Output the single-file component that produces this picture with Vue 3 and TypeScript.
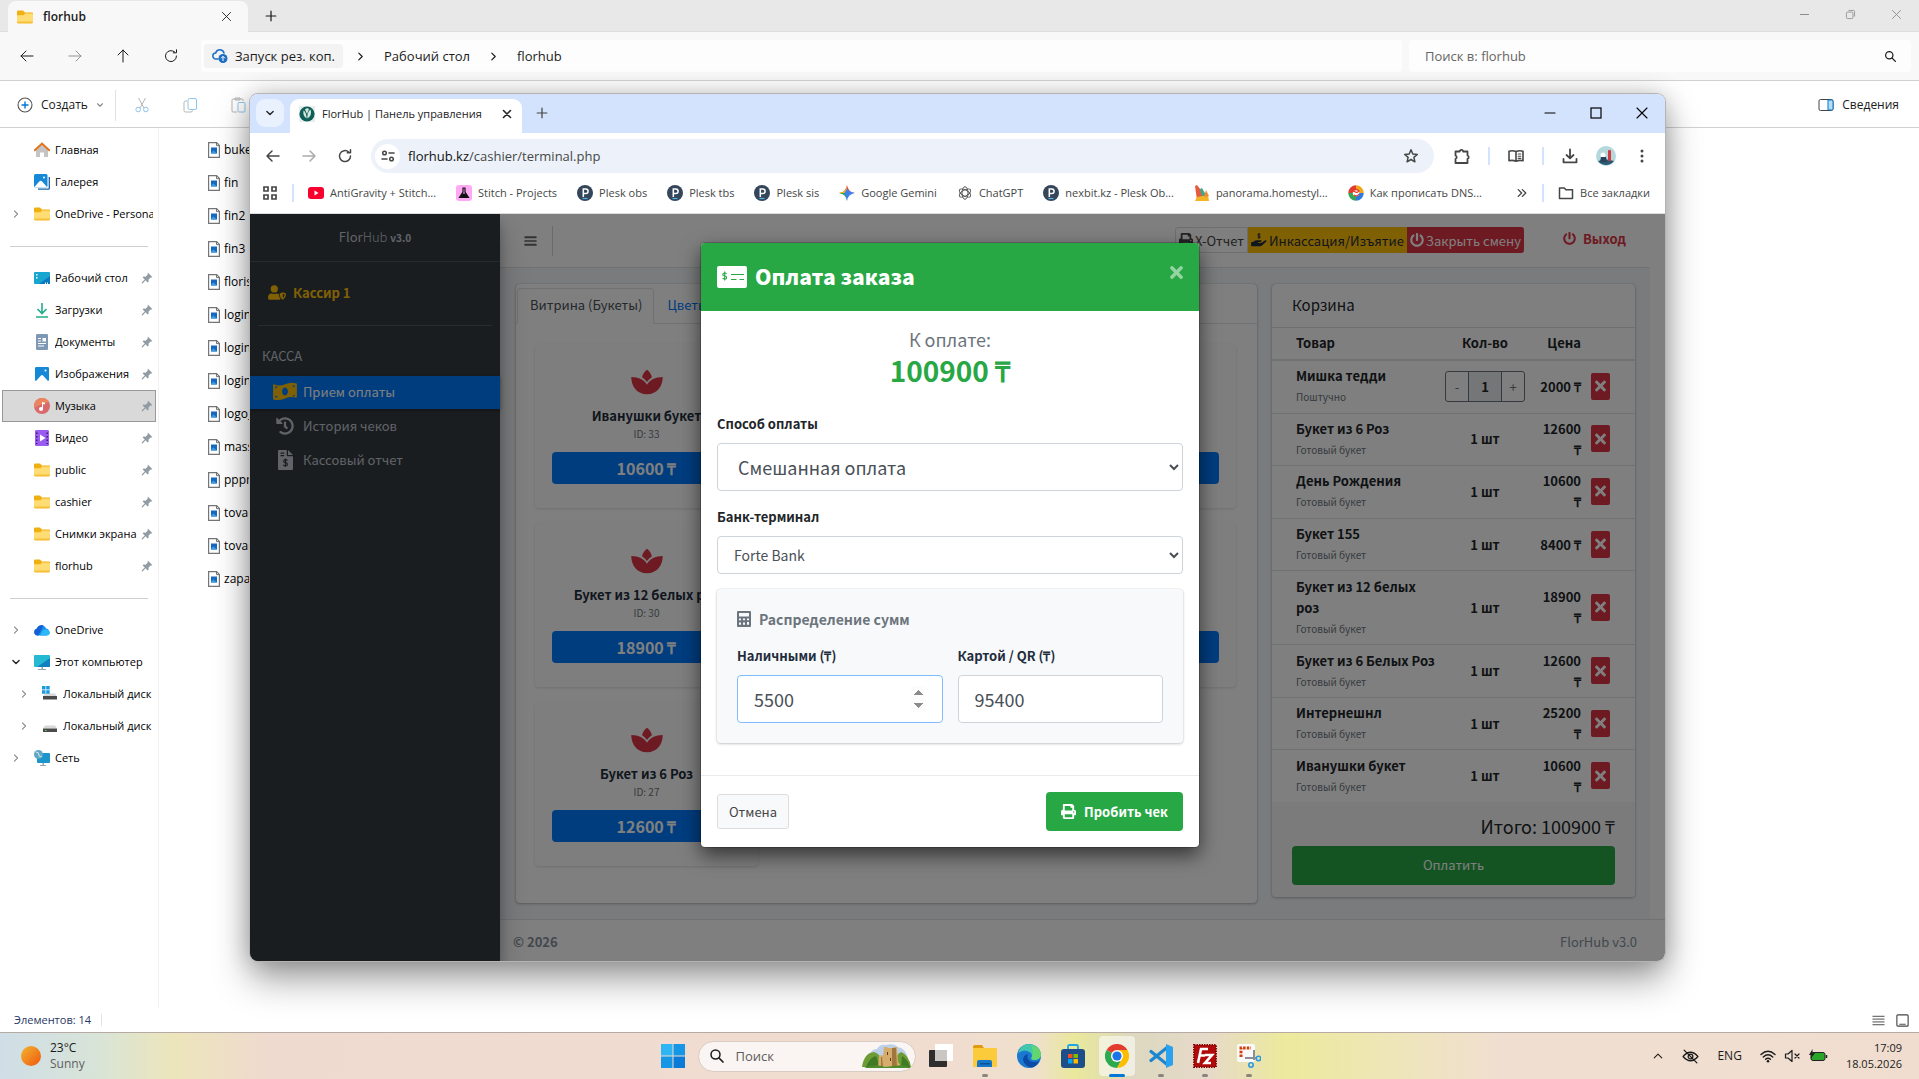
<script setup lang="ts">
import { h, ref, type FunctionalComponent } from 'vue'

const line = (d: string, w = 1.5) => `<path d="${d}" fill="none" stroke="currentColor" stroke-width="${w}" stroke-linecap="round" stroke-linejoin="round"/>`
const fill = (d: string, c = 'currentColor') => `<path d="${d}" fill="${c}"/>`

// name -> [viewBox, markup]
const glyphs: Record<string, [string, string]> = {
  close: ['0 0 16 16', line('M3 3l10 10M13 3L3 13', 1.1)],
  closeBold: ['0 0 16 16', line('M4 4l8 8M12 4l-8 8', 1.8)],
  plus: ['0 0 16 16', line('M8 2.5v11M2.500 8h11', 1.4)],
  minimize: ['0 0 16 16', line('M3 8h10', 1.2)],
  maximize: ['0 0 16 16', '<rect x="3" y="3" width="10" height="10" fill="none" stroke="currentColor" stroke-width="1.2"/>'],
  restore: ['0 0 16 16', '<rect x="3" y="5" width="8" height="8" rx="1.5" fill="none" stroke="currentColor"/>' + line('M6 3h5.500A1.500 1.500 0 0 1 13 4.500V10', 1)],
  left: ['0 0 16 16', line('M14 8H2M7 3L2 8l5 5', 1.5)],
  right: ['0 0 16 16', line('M2 8h12M9 3l5 5-5 5', 1.5)],
  up: ['0 0 16 16', line('M8 14V2M3 7l5-5 5 5', 1.3)],
  refresh: ['0 0 16 16', line('M13.500 8a5.500 5.500 0 1 1-1.800-4M13.500 1.800v3h-3.200', 1.5)],
  chevR: ['0 0 16 16', line('M5.500 3l5 5-5 5', 1.7)],
  chevD: ['0 0 16 16', line('M3 5.500l5 5 5-5', 2.2)],
  chevU: ['0 0 16 16', line('M3 10.500l5-5 5 5', 1.5)],
  dblChev: ['0 0 16 16', line('M3 3.500L7.500 8 3 12.500M8.500 3.500L13 8l-4.500 4.500', 1.8)],
  cloud: ['0 0 16 16', line('M6 11H4a3 3 0 0 1-.3-6A4.300 4.300 0 0 1 12 5', 1.5) + '<circle cx="11" cy="10.5" r="4.5" fill="#1a6fc4"/><path d="M11 13V8.500M9 10.300l2-2 2 2" stroke="#fff" fill="none"/>'],
  search: ['0 0 16 16', '<circle cx="6.5" cy="6.5" r="4.5" fill="none" stroke="currentColor" stroke-width="1.5"/>' + line('M10 10l4 4', 1.7)],
  create: ['0 0 16 16', '<circle cx="8" cy="8" r="7" fill="none" stroke="#555" stroke-width="1.1"/><path d="M8 4.500v7M4.500 8h7" stroke="#0078d4" stroke-width="1.4"/>'],
  cut: ['0 0 16 16', '<path d="M4.500 1l5.500 10M11.500 1L6 11" stroke="#b5b5b5" fill="none"/><circle cx="4.2" cy="12.5" r="2.3" fill="none" stroke="#8ec3ea"/><circle cx="11.8" cy="12.5" r="2.3" fill="none" stroke="#8ec3ea"/>'],
  copy: ['0 0 16 16', '<path d="M5 4H3.500A1.500 1.500 0 0 0 2 5.500v8A1.500 1.500 0 0 0 3.500 15H9a1.500 1.500 0 0 0 1.500-1.500" stroke="#b5b5b5" fill="none"/><rect x="6" y="1.5" width="8.5" height="11" rx="1.5" fill="none" stroke="#8ec3ea"/>'],
  paste: ['0 0 16 16', '<path d="M7 15H3a1 1 0 0 1-1-1V3a1 1 0 0 1 1-1h9a1 1 0 0 1 1 1v1M5 1h5v2H5z" stroke="#b5b5b5" fill="none"/><rect x="8" y="5.5" width="7" height="9.5" rx="1" fill="none" stroke="#8ec3ea"/>'],
  details: ['0 0 16 16', '<rect x="1" y="2.5" width="14" height="11" rx="1.5" fill="none" stroke="#444"/><path d="M10 3h3.500A1.500 1.500 0 0 1 15 4.500v7a1.500 1.500 0 0 1-1.500 1.500H10z" fill="#b9dcf6" stroke="#0078d4"/>'],
  listView: ['0 0 16 16', line('M2 3.500h12M2 6.500h12M2 9.500h12M2 12.500h12', 1)],
  gridView: ['0 0 16 16', '<rect x="2" y="2" width="12" height="12" rx="1" fill="none" stroke="currentColor" stroke-width="1.2"/>' + line('M5 12h6', 1)],
  folder: ['0 0 16 16', fill('M0 3.500V2.500Q0 1.500 1 1.500H6L8 3.500H15Q16 3.500 16 4.500V8H0z', '#f0b012') + '<path d="M0 6.200h6.500l1.500-1.700h7q1 0 1 1V13q0 1.200-1.200 1.200H1.200Q0 14.200 0 13z" fill="#ffdc74"/>' + fill('M0 12.500h16q0 1.900-1.200 1.900H1.200Q0 14.400 0 12.500z', '#f5c03c')],
  home: ['0 0 16 16', fill('M2 7.500L8 2l6 5.500V15H10v-4.500H6V15H2z', '#c4c4c4') + '<path d="M.8 8.200L8 1.500l7.200 6.700" stroke="#e2741c" stroke-width="2" fill="none" stroke-linecap="round"/>'],
  gallery: ['0 0 16 16', '<path d="M4 15.200h10.500q.8 0 .8-.8V3" stroke="#1763ad" fill="none" stroke-width="1.3"/><rect width="13.5" height="13.5" rx="1.5" fill="#1688d8"/><path d="M0 13.500l5.500-6.200q1.200-1 2.400 0l5.600 6.200z" fill="#fff"/><circle cx="10" cy="3.5" r="1" fill="#fff"/>'],
  desktop: ['0 0 16 16', '<rect y="2" width="16" height="12" rx="1" fill="#17a6cf"/><path d="M16 6v8H5z" fill="#0b79bd"/><path d="M2 4h1.500v1.500H2zM2 7h1.500v1.500H2zM11 12.500h1V14h-1zM13 12.500h1V14h-1z" fill="#fff"/>'],
  download: ['0 0 16 16', '<path d="M8 1v10M3.500 7L8 11.500 12.500 7M2 15h12" stroke="#24ad8b" stroke-width="1.6" fill="none"/>'],
  docs: ['0 0 16 16', '<rect x="2" y="0" width="12" height="16" rx="1.3" fill="#7d97b5"/><path d="M4 4.500h3M4 7h3M4 9.500h8M4 12h6" stroke="#fff" stroke-width="1.2"/><rect x="8.5" y="4" width="3.5" height="3.5" fill="#fff"/>'],
  images: ['0 0 16 16', '<rect x="1" y="1" width="14" height="14" rx="1.2" fill="#1688d8"/><path d="M2 15l5-5.500q1-.8 2 0l5 5.500z" fill="#fff"/><circle cx="11.5" cy="4.5" r="1" fill="#fff"/>'],
  music: ['0 0 16 16', '<circle cx="8" cy="8" r="8" fill="#d96a6b"/><path d="M8 0a8 8 0 0 0-7.700 10Q6 6 15 4A8 8 0 0 0 8 0z" fill="#ea8560"/><path d="M8 11V4l3 .8v1.700L9 6v5" fill="#fff"/><circle cx="7" cy="11" r="2" fill="#fff"/>'],
  video: ['0 0 16 16', '<rect x="1" y="0" width="14" height="16" rx="1.3" fill="#9a5cf0"/><path d="M2 2.500h1.500V4H2zM2 6h1.500v1.500H2zM2 9.500h1.500V11H2zM2 13h1.500v1H2zM12.500 2.500H14V4h-1.500zM12.500 6H14v1.500h-1.500zM12.500 9.500H14V11h-1.500zM12.500 13H14v1h-1.500z" fill="#3b1a75"/><path d="M6 4.500l5.500 3.500L6 11.500z" fill="#fff"/>'],
  pin: ['0 0 16 16', fill('M9.500 1l5.500 5.500-1.500 1-.8-.2-2.700 2.700.2 3-1.300 1L6 11 2 15.200 1 15l.2-1.200L5 10 2.200 7.300 3.200 6l3 .2L8.900 3.500 8.700 2.500z')],
  onedrive: ['0 0 16 16', fill('M3.500 13.500a3.500 3.500 0 0 1-.6-6.900A5 5 0 0 1 12 6.500a3.600 3.600 0 0 1 .8 7z', '#1490f0') + fill('M3.500 13.500a3.500 3.500 0 0 1-.6-6.900A5 5 0 0 1 9.500 3.300L4.500 13.500z', '#1560d4') + fill('M9 8q5-2 7 2 0 3.500-3.500 3.500H6z', '#2cb8f8')],
  pc: ['0 0 16 16', '<rect y="1" width="16" height="12" rx="1" fill="#25b9d3"/><path d="M16 4v8q0 1-1 1H3z" fill="#1180bf"/><path d="M7.500 13h1.500v2H12v1H4v-1h3.500z" fill="#9aa4ad"/>'],
  drive: ['0 0 16 16', fill('M3 7.500h10l2 3H1z', '#d8d8d8') + fill('M1 10.500h14V14H1z', '#4a4a4a') + fill('M3 12h1.500v1H3z', '#4fe04f')],
  winDrive: ['0 0 16 16', fill('M3 7.500h10l2 3H1z', '#d8d8d8') + fill('M1 10h14v3.500H1z', '#4a4a4a') + fill('M0 0h3.500v3.500H0zM4.200 0h3.500v3.500H4.200zM0 4.200h3.500v3.500H0zM4.200 4.200h3.500v3.500H4.200z', '#1a9ae0')],
  network: ['0 0 16 16', '<rect x="3" y="3" width="13" height="10" rx="1" fill="#1c95cc"/><path d="M8.500 13h1.500v2h2v1H6v-1h2.500z" fill="#9aa4ad"/><circle cx="4.5" cy="4.5" r="4.5" fill="#5fa7c4"/><path d="M2 2q3 0 3 3t3 1" stroke="#d5ecf5" fill="none"/>'],
  file: ['0 0 12 16', '<path d="M.6.6h8l2.800 2.800v12H.6z" fill="#fff" stroke="#757575" stroke-width="1.2"/><path d="M8.500.6v3h3" fill="none" stroke="#757575"/><rect x="3" y="5.5" width="6" height="6" fill="#1769c0"/><path d="M3 10.500l2.500-2 3.500 3H3z" fill="#3f9be0"/>'],
  tune: ['0 0 16 16', '<circle cx="4.5" cy="5" r="1.8" fill="none" stroke="currentColor" stroke-width="1.5"/><circle cx="11.5" cy="11" r="1.8" fill="none" stroke="currentColor" stroke-width="1.5"/>' + line('M9 5h5M2 11h5', 1.6)],
  star: ['0 0 16 16', line('M8 1.800l1.800 4.200 4.500.4-3.400 3 1 4.400L8 11.500l-3.900 2.300 1-4.400-3.400-3 4.500-.4z', 1.5)],
  puzzle: ['0 0 16 16', line('M1.500 3.500h4.200a1.700 1.700 0 0 1 3.400 0h4.400v4a1.800 1.800 0 0 1 0 3.400v4.100H1.500v-4a1.900 1.900 0 0 0 0-3.500z', 1.8)],
  reader: ['0 0 16 16', line('M8 3.500Q4.500 2.200 1 3.200v9.600q3.500-1 7 .4 3.500-1.400 7-.4V3.200q-3.500-1-7 .3zM8 3.500v9.700', 1.6) + line('M10.200 6h2.600M10.200 8.200h2.600M10.200 10.400h2.600', 1.1)],
  save: ['0 0 16 16', line('M8 1.500v8.500M4.500 7L8 10.300 11.500 7M1.500 11v3.300h13V11', 1.8)],
  dots: ['0 0 16 16', '<g fill="currentColor"><circle cx="8" cy="3" r="1.5"/><circle cx="8" cy="8" r="1.5"/><circle cx="8" cy="13" r="1.5"/></g>'],
  apps: ['0 0 16 16', '<path d="M2 2h4v4H2zM10 2h4v4h-4zM2 10h4v4H2zM10 10h4v4h-4z" fill="none" stroke="currentColor" stroke-width="1.7"/>'],
  folderLine: ['0 0 16 16', line('M1.500 3h4.800l1.600 1.800h6.600v8.700h-13z', 1.5)],
  avatar: ['0 0 20 20', '<circle cx="10" cy="10" r="10" fill="#b4d8dc"/><path d="M2 15q8-3 16 0a10 10 0 0 1-16 0z" fill="#2d5872"/><rect x="12" y="4" width="3" height="11" rx="1" fill="#d23c3e"/><circle cx="7" cy="9" r="2.5" fill="#fff"/><path d="M4 16l1-5h5l1 5z" fill="#28435e"/>'],
  flor: ['0 0 16 16', '<rect width="16" height="16" fill="#e9eeec"/><circle cx="8" cy="8" r="7.6" fill="#0f5f58"/><path d="M4.500 4.500Q7.300 6 7.600 12.500 3.500 10 4.500 4.500zM8.400 12.500Q8 6 11.500 3.500 13.500 9 8.400 12.500zM6 3.500l2 4.500 2-5Q8 1.500 6 3.500z" fill="#d5e8e0"/>'],
  youtube: ['0 0 16 16', '<rect y="2" width="16" height="12" rx="3" fill="#f8002e"/><path d="M6.500 5.500l4 2.500-4 2.500z" fill="#fff"/>'],
  stitch: ['0 0 16 16', '<rect width="16" height="16" rx="3" fill="#ffa8f3"/><path d="M6.500 3h3M7 3v4l-3.500 5.500h9L9 7V3" fill="none" stroke="#111" stroke-width="1.2"/><path d="M6 8.500h4l2.500 4.500h-9z" fill="#111"/>'],
  plesk: ['0 0 16 16', '<circle cx="8" cy="8" r="8" fill="#35455a"/><path d="M6.300 12V4h2.500a2.300 2.300 0 0 1 0 4.600H6.300" fill="none" stroke="#fff" stroke-width="1.5"/><path d="M5.500 13.500h5" stroke="#49b6e8" stroke-width="1.2"/>'],
  gemini: ['0 0 16 16', '<path d="M8 0Q9 7 16 8H0Q7 7 8 0z" fill="#e8483b"/><path d="M8 2Q7 7 0 8q7 .5 8 5z" fill="#f7b80c"/><path d="M8 16Q7 9 0 8h8z" fill="#2ba24c"/><path d="M8.500 3.500Q10 7.200 16 8 9 9 8 16q-.8-6-3-7.500z" fill="#3b82f0"/>'],
  gpt: ['0 0 16 16', '<g fill="none" stroke="#555"><ellipse cx="8" cy="8" rx="3" ry="6.3"/><ellipse cx="8" cy="8" rx="3" ry="6.3" transform="rotate(60 8 8)"/><ellipse cx="8" cy="8" rx="3" ry="6.3" transform="rotate(120 8 8)"/></g>'],
  panorama: ['0 0 16 16', fill('M1 1l2-1 7 9-1 6H3z', '#e65a42') + fill('M6 4l2-1 4 7-3 5z', '#3ba889') + fill('M1 16l2-4 11-2 1 6z', '#f3b322') + fill('M12 5l3 6-5 1z', '#ef8a36')],
  dns: ['0 0 16 16', '<g fill="none" stroke-width="4.5"><path d="M2.500 8A5.500 5.500 0 0 1 8 2.500" stroke="#e43b30"/><path d="M8 2.500A5.500 5.500 0 0 1 13.500 8" stroke="#f2a71b"/><path d="M13.500 8A5.500 5.500 0 0 1 8 13.500" stroke="#2d7be0"/><path d="M8 13.500A5.500 5.500 0 0 1 2.500 8" stroke="#3aa655"/></g><path d="M5 6q3-3 6 0l-2 1.500zM6 10q3 2 5-1" stroke="#e43b30" stroke-width="1.2" fill="none"/>'],
  bars: ['0 0 448 512', fill('M16 80h416q16 0 16 16v40q0 16-16 16H16Q0 152 0 136V96Q0 80 16 80zM16 226h416q16 0 16 16v28q0 16-16 16H16Q0 286 0 270v-28Q0 226 16 226zM16 360h416q16 0 16 16v40q0 16-16 16H16Q0 432 0 416v-40Q0 360 16 360z')],
  userShield: ['0 0 640 512', fill('M224 256a128 128 0 1 0 0-256 128 128 0 0 0 0 256zM134 288h12q78 36 156 0h4q48 3 78 32 8 96 62 148-10 44-48 44H48Q0 512 0 464v-42Q4 298 134 288z') + '<path d="M528 246l110 44q10 150-110 222-120-72-112-222zm0 56v150q60-50 60-128z" fill="currentColor" fill-rule="evenodd"/>'],
  money: ['0 0 640 512', '<path d="M24 62q150 64 296 0t296-30q24 4 24 28v334q0 22-20 30-150-42-296 20T26 480Q0 476 0 452V82q4-24 24-20zM320 150c-44 0-80 48-80 106s36 106 80 106 80-48 80-106-36-106-80-106zM60 120v54q46-4 60-50zm0 298h56q-2-48-56-54zM580 92h-60q4 46 60 52zm0 300v-50q-44 0-56 42z" fill="currentColor" fill-rule="evenodd"/>'],
  history: ['0 0 512 512', fill('M504 255.531c.253 136.640-111.180 248.372-247.820 248.468-59.015.042-113.223-20.530-155.822-54.911-11.077-8.940-11.905-25.541-1.839-35.607l11.267-11.267c8.609-8.609 22.353-9.551 31.891-1.984C173.062 425.135 212.781 440 256 440c101.705 0 184-82.311 184-184 0-101.705-82.311-184-184-184-48.814 0-93.149 18.969-126.068 49.932l50.754 50.754c10.080 10.080 2.941 27.314-11.313 27.314H24c-8.837 0-16-7.163-16-16V38.627c0-14.254 17.234-21.393 27.314-11.314l49.372 49.372C129.209 34.136 189.552 8 256 8c136.810 0 247.747 110.780 248 247.531zm-180.912 78.784l9.823-12.630c8.138-10.463 6.253-25.542-4.210-33.679L288 256.349V152c0-13.255-10.745-24-24-24h-16c-13.255 0-24 10.745-24 24v135.651l65.409 50.874c10.463 8.137 25.541 6.253 33.679-4.210z')],
  invoice: ['0 0 384 512', '<path d="M24 0h200v136q0 24 24 24h136v328q0 24-24 24H24q-24 0-24-24V24Q0 0 24 0zm40 64v32h96V64zm0 64v32h96v-32z" fill="currentColor" fill-rule="evenodd"/><path d="M256 0l128 128H256z" fill="currentColor"/><path d="M244 268q-20-20-52-20-46 2-46 38t46 38 48 40-48 40q-34 0-56-20M192 220v210" fill="none" stroke="#343a40" stroke-width="30"/>'],
  power: ['0 0 512 512', fill('M400 54.100c63 45 104 118.600 104 201.900 0 136.800-110.800 247.700-247.500 248C120 504.300 8.200 393 8 256.400 7.900 173.100 48.900 99.300 111.800 54.200c11.700-8.300 28-4.800 35 7.700L162.600 90c5.900 10.500 3.100 23.800-6.600 31-41.500 30.800-68 79.600-68 134.900-.1 92.300 74.500 168.100 168 168.100 91.600 0 168.600-74.200 168-169.100-.3-51.800-24.700-101.800-68.100-134-9.700-7.200-12.400-20.500-6.500-30.900l15.800-28.100c7-12.400 23.200-16.100 34.800-7.800zM296 264V24c0-13.300-10.700-24-24-24h-32c-13.300 0-24 10.700-24 24v240c0 13.300 10.700 24 24 24h32c13.300 0 24-10.700 24-24z')],
  print: ['0 0 512 512', fill('M448 192V77.250c0-8.490-3.370-16.620-9.370-22.630L393.370 9.370c-6-6-14.140-9.370-22.630-9.370H96C78.330 0 64 14.330 64 32v160c-35.350 0-64 28.650-64 64v112c0 8.840 7.160 16 16 16h48v96c0 17.670 14.330 32 32 32h320c17.670 0 32-14.330 32-32v-96h48c8.840 0 16-7.160 16-16V256c0-35.350-28.650-64-64-64zm-64 256H128v-96h256v96zm0-224H128V64h192v48c0 8.840 7.160 16 16 16h48v96zm48 72c-13.250 0-24-10.750-24-24 0-13.260 10.750-24 24-24s24 10.740 24 24c0 13.250-10.750 24-24 24z')],
  handUsd: ['0 0 576 512', fill('M0 344q0-16 16-16h56l46-38q34-26 74-26h162q30 6 28 32-4 28-32 32h-94q-14 2-16 14 2 14 16 16h126l120-88q26-16 50 0 26 26-6 54L390 466q-22 16-48 18H16q-16 0-16-16z') + '<path d="M338 56q-20-18-50-18-42 0-42 32t42 36 46 34-46 36q-34 0-54-20M288 0v214" fill="none" stroke="currentColor" stroke-width="34"/>'],
  times: ['0 0 352 512', fill('M242.720 256l100.070-100.070c12.280-12.280 12.280-32.190 0-44.480l-22.240-22.240c-12.280-12.280-32.190-12.280-44.480 0L176 189.280 75.930 89.210c-12.280-12.280-32.190-12.280-44.480 0L9.210 111.450c-12.280 12.280-12.280 32.190 0 44.480L109.280 256 9.210 356.070c-12.280 12.280-12.280 32.190 0 44.480l22.240 22.240c12.280 12.280 32.200 12.280 44.480 0L176 322.720l100.070 100.070c12.280 12.280 32.200 12.280 44.480 0l22.240-22.240c12.280-12.280 12.280-32.190 0-44.480L242.720 256z')],
  spa: ['0 0 576 512', fill('M288 32C262 50 206 105 200 172C240 196 272 228 288 256C304 228 336 196 376 172C370 105 314 50 288 32zM0 164C0 330 100 480 288 480S576 330 576 164C440 164 340 220 288 306C236 220 136 164 0 164z')],
  check: ['0 0 30 22', '<rect width="30" height="22" rx="2" fill="#fff"/><path d="M14 8.500h13M14 13.500h5.500M22.500 13.500H27" stroke="#28a745" stroke-width="1.2"/><path d="M9.500 8q-.5-1-1.900-1-1.800 0-1.800 1.500T7.700 10t1.900 1.600T7.700 13q-1.500 0-2.100-1M7.700 5.600v8.800" stroke="#28a745" fill="none" stroke-width="1.1"/>'],
  calc: ['0 0 14 16', '<path d="M1 0h12q1 0 1 1v14q0 1-1 1H1q-1 0-1-1V1Q0 0 1 0zm1 2v3.500h10V2zm0 5.500v1.700h2V7.500zm4 0v1.700h2V7.500zm4 0v1.700h2V7.500zM2 11.500v2.300h2v-2.300zm4 0v2.300h2v-2.300zm4-.500v2.800h2V11z" fill="currentColor" fill-rule="evenodd"/>'],
  windows: ['0 0 24 24', fill('M0 0h11.500v11.500H0z', '#2fb4f4') + fill('M12.500 0H24v11.500H12.500zM0 12.500h11.500V24H0z', '#1597e5') + fill('M12.500 12.500H24V24H12.500z', '#0a7bd6')],
  castle: ['0 0 50 24', fill('M7 17Q7 5 15 5 18 0 24 1q8-2 12 2 9 2 10 13z', '#bcd0ea') + fill('M0 23q2-14 12-15 8 2 10 15zM33 23q0-13 6-15 8 3 10 15z', '#6d9c35') + fill('M4 23q4-10 10-11l4 11zM40 12q6 4 8 11h-9z', '#3f7a24') + fill('M16 23l1-11 3-1 1 1 1-9h3l1 1h5l1-1h3l1 15 4 5z', '#d5ac6c') + fill('M30 4h4l1 19h-5zM19 13h1l1 10h-2z', '#a0763f') + fill('M25 8h1v3h-1zM28 14h1v3h-1z', '#5c3d1a') + fill('M2 24q10-5 21-1l17-2 8 2v1z', '#4c8a2c')],
  taskView: ['0 0 24 24', '<rect x="0" y="6" width="18" height="17" rx="1" fill="#2e2e2e"/><rect x="6" y="0" width="18" height="17" rx="1" fill="#fff"/><rect x="6" y="6" width="12" height="11" fill="#c9c6c4"/>'],
  explorer: ['0 0 24 24', fill('M0 2.500Q0 1 1.500 1H9l2 3H0z', '#e09c10') + '<rect y="4" width="24" height="19" rx="1" fill="#fccb3c"/><path d="M4 23v-5q0-2 2-2h11q2 0 2 2v5z" fill="#1676c8"/><path d="M7 19h10v1.500H7z" fill="#0c4f96"/>'],
  edge: ['0 0 24 24', '<circle cx="12" cy="12" r="12" fill="#1b78cf"/><path d="M1 9Q4 0 12 0q11 1 12 11-1 5-7 5-3 0-3-2 2-2 0-5Q8 4 1 9z" fill="#3fc7b0"/><path d="M14 1q10 2 10 11-2 4-7 4-3-1-2-3 2-6-1-12z" fill="#63d66e"/><path d="M22 17q-5 2-9 0-4-3-2-7-5 1-5 6 2 7 9 7.500Q20 22 22 17z" fill="#0c4ba5"/>'],
  store: ['0 0 24 24', '<path d="M7 7V2.500Q7 1 8.500 1h7Q17 1 17 2.500V7" fill="none" stroke="#1fa6e0" stroke-width="1.8"/><rect y="5" width="24" height="19" rx="3" fill="#1d4e89"/><path d="M7 10h4.500v4H7z" fill="#f25022"/><path d="M12.500 10H17v4h-4.500z" fill="#7fba00"/><path d="M7 15h4.500v4.500H7z" fill="#00a4ef"/><path d="M12.500 15H17v4.500h-4.500z" fill="#ffb900"/>'],
  chrome: ['0 0 24 24', fill('M12 12L1.600 6A12 12 0 0 1 22.400 6z', '#e33b2e') + fill('M12 12L1.600 6A12 12 0 0 0 12 24l5-9z', '#2da94f') + fill('M12 12l5 3-5 9A12 12 0 0 0 22.400 6H12z', '#fdbd00') + '<circle cx="12" cy="12" r="6" fill="#fff"/><circle cx="12" cy="12" r="4.6" fill="#1a73e8"/>'],
  vscode: ['0 0 24 24', '<path d="M17.500 4L2 16.500M2 7.500L17.500 20" stroke="#1c86d1" stroke-width="3.2" stroke-linecap="round"/><path d="M17 0l7 3v18l-7 3z" fill="#2aa2ef"/>'],
  filezilla: ['0 0 24 24', '<rect x="1" y="1" width="22" height="22" fill="#b00a0a" stroke="#8c0808" stroke-width="2" stroke-dasharray="1.5 1"/><path d="M5 19L8 5h7M7 11.500h5M12 11h7l-7 8h6" fill="none" stroke="#fff" stroke-width="2.6"/>'],
  snip: ['0 0 24 24', '<rect width="18" height="18" rx="2" fill="#fafafa"/><path d="M4 13V4h10" fill="none" stroke="#d83b01" stroke-width="3" stroke-dasharray="2.5 1.2"/><path d="M17 6v10M8 14h12" stroke="#8b8f94" stroke-width="2"/><circle cx="14" cy="21" r="2.2" fill="none" stroke="#2b9be0" stroke-width="1.6"/><circle cx="21.5" cy="14.5" r="2.2" fill="none" stroke="#2b9be0" stroke-width="1.6"/>'],
  eyeOff: ['0 0 16 16', line('M1 8q7-8 14 0-7 8-14 0zM2 2l12 12', 1.2) + '<circle cx="8" cy="8" r="2.2" fill="none" stroke="currentColor" stroke-width="1.2"/>'],
  wifi: ['0 0 16 16', line('M1 6.500q7-6.500 14 0M3.300 9q4.700-4.300 9.400 0M5.600 11.300q2.400-2 4.800 0', 1.4) + '<circle cx="8" cy="13.3" r="1.3" fill="currentColor"/>'],
  mute: ['0 0 16 16', line('M1.500 6h2.500L8 2.500v11L4 10H1.500zM11 6l4 4M15 6l-4 4', 1.2)],
  battery: ['0 0 20 16', '<rect x="3" y="4.5" width="14" height="8" rx="2" fill="#2aa52a" stroke="#222"/><path d="M18.500 7v3" stroke="#222" stroke-width="1.5"/><path d="M4.500 1L1 7h2.500L2.500 11 7 5H4.500z" fill="#222"/>'],
}

const Glyph: FunctionalComponent<{ n: string; w?: number; ht?: number }> = (p) =>
  h('svg', { viewBox: glyphs[p.n][0], width: p.w ?? 16, height: p.ht ?? p.w ?? 16, 'aria-hidden': 'true', innerHTML: glyphs[p.n][1] })
Glyph.props = ['n', 'w', 'ht']

interface Place { t: string; i: string; pin?: boolean; open?: string; child?: boolean; on?: boolean }
const groups: Place[][] = [
  [{ t: 'Главная', i: 'home' }, { t: 'Галерея', i: 'gallery' }, { t: 'OneDrive - Personal', i: 'folder', open: 'chevR' }],
  [
    { t: 'Рабочий стол', i: 'desktop', pin: true }, { t: 'Загрузки', i: 'download', pin: true },
    { t: 'Документы', i: 'docs', pin: true }, { t: 'Изображения', i: 'images', pin: true },
    { t: 'Музыка', i: 'music', pin: true, on: true }, { t: 'Видео', i: 'video', pin: true },
    { t: 'public', i: 'folder', pin: true }, { t: 'cashier', i: 'folder', pin: true },
    { t: 'Снимки экрана', i: 'folder', pin: true }, { t: 'florhub', i: 'folder', pin: true },
  ],
  [
    { t: 'OneDrive', i: 'onedrive', open: 'chevR' }, { t: 'Этот компьютер', i: 'pc', open: 'chevD' },
    { t: 'Локальный диск', i: 'winDrive', open: 'chevR', child: true }, { t: 'Локальный диск', i: 'drive', open: 'chevR', child: true },
    { t: 'Сеть', i: 'network', open: 'chevR' },
  ],
]
const files = ['buket', 'fin', 'fin2', 'fin3', 'florist', 'login', 'login2', 'login3', 'logo_', 'massa', 'pppr', 'tovar', 'tovar2', 'zapas']
const bookmarks = [
  { t: 'AntiGravity + Stitch...', i: 'youtube' }, { t: 'Stitch - Projects', i: 'stitch' }, { t: 'Plesk obs', i: 'plesk' },
  { t: 'Plesk tbs', i: 'plesk' }, { t: 'Plesk sis', i: 'plesk' }, { t: 'Google Gemini', i: 'gemini' }, { t: 'ChatGPT', i: 'gpt' },
  { t: 'nexbit.kz - Plesk Ob...', i: 'plesk' }, { t: 'panorama.homestyl...', i: 'panorama' }, { t: 'Как прописать DNS...', i: 'dns' },
]
const menu = [
  { t: 'Прием оплаты', i: 'money', w: 24, ht: 19, on: true },
  { t: 'История чеков', i: 'history', w: 18, ht: 18, on: false },
  { t: 'Кассовый отчет', i: 'invoice', w: 15, ht: 20, on: false },
]
const products = [
  { t: 'Иванушки букет', id: 33, p: 10600 }, { t: 'Интернешнл', id: 32, p: 25200 }, { t: 'Букет 6 Роз', id: 31, p: 12600 },
  { t: 'Букет из 12 белых роз', id: 30, p: 18900 }, { t: 'Букет 155', id: 29, p: 8400 }, { t: 'Рождение', id: 28, p: 10600 },
  { t: 'Букет из 6 Роз', id: 27, p: 12600 },
]
const basket = [
  { t: 'Мишка тедди', s: 'Поштучно', p: 2000, step: true },
  { t: 'Букет из 6 Роз', s: 'Готовый букет', p: 12600 },
  { t: 'День Рождения', s: 'Готовый букет', p: 10600 },
  { t: 'Букет 155', s: 'Готовый букет', p: 8400 },
  { t: 'Букет из 12 белых роз', s: 'Готовый букет', p: 18900 },
  { t: 'Букет из 6 Белых Роз', s: 'Готовый букет', p: 12600 },
  { t: 'Интернешнл', s: 'Готовый букет', p: 25200 },
  { t: 'Иванушки букет', s: 'Готовый букет', p: 10600 },
]
const apps = [
  { i: 'taskView', run: false }, { i: 'explorer', run: true }, { i: 'edge', run: false }, { i: 'store', run: false },
  { i: 'chrome', run: true, on: true }, { i: 'vscode', run: true }, { i: 'filezilla', run: true }, { i: 'snip', run: true },
]
const total = basket.reduce((s, b) => s + b.p, 0)
const cash = ref(5500)
const card = ref(95400)
</script>

<template>
  <div class="desk">
    <section class="explorer">
      <header class="ex-tabs">
        <div class="ex-tab"><Glyph n="folder" /><b>florhub</b><button aria-label="Закрыть вкладку"><Glyph n="close" :w="13" /></button></div>
        <button class="ex-new" aria-label="Новая вкладка"><Glyph n="plus" :w="14" /></button>
        <div class="ex-win"><button aria-label="Свернуть"><Glyph n="minimize" :w="13" /></button><button aria-label="Восстановить"><Glyph n="restore" :w="13" /></button><button aria-label="Закрыть"><Glyph n="close" :w="13" /></button></div>
      </header>
      <nav class="ex-nav">
        <div class="ex-arrows">
          <button aria-label="Назад"><Glyph n="left" /></button><button aria-label="Вперед" class="dim"><Glyph n="right" /></button>
          <button aria-label="Вверх"><Glyph n="up" /></button><button aria-label="Обновить"><Glyph n="refresh" /></button>
        </div>
        <div class="ex-path">
          <a href="#" class="backup"><Glyph n="cloud" /><span>Запуск рез. коп.</span></a>
          <Glyph n="chevR" :w="11" /><a href="#">Рабочий стол</a><Glyph n="chevR" :w="11" /><a href="#">florhub</a>
        </div>
        <label class="ex-find"><input type="text" placeholder="Поиск в: florhub" aria-label="Поиск" /><Glyph n="search" :w="13" /></label>
      </nav>
      <div class="ex-cmd">
        <button class="mk"><Glyph n="create" /><span>Создать</span><Glyph n="chevD" :w="8" /></button>
        <i class="vr"></i>
        <button class="tool" aria-label="Вырезать"><Glyph n="cut" /></button><button class="tool" aria-label="Копировать"><Glyph n="copy" /></button><button class="tool" aria-label="Вставить"><Glyph n="paste" /></button>
        <button class="info"><Glyph n="details" /><span>Сведения</span></button>
      </div>
      <div class="ex-body">
        <aside class="places">
          <ul v-for="(g, k) in groups" :key="k">
            <li v-for="(p, j) in g" :key="j" :class="{ child: p.child, on: p.on }">
              <span class="tw" :class="{ dark: p.open === 'chevD' }"><Glyph v-if="p.open" :n="p.open" :w="10" /></span>
              <Glyph :n="p.i" /><span class="nm">{{ p.t }}</span><Glyph v-if="p.pin" n="pin" :w="12" class="pin" />
            </li>
          </ul>
        </aside>
        <ul class="files"><li v-for="f in files" :key="f"><Glyph n="file" :w="12" :ht="16" />{{ f }}</li></ul>
      </div>
      <footer class="ex-status"><span>Элементов: 14</span><div><Glyph n="listView" :w="15" /><Glyph n="gridView" :w="15" /></div></footer>
    </section>

    <section class="browser">
      <header class="strip">
        <button class="tablist" aria-label="Поиск вкладок"><Glyph n="chevD" :w="10" /></button>
        <div class="tab"><Glyph n="flor" /><span>FlorHub | Панель управления</span><button aria-label="Закрыть"><Glyph n="closeBold" :w="14" /></button></div>
        <button class="newtab" aria-label="Новая вкладка"><Glyph n="plus" :w="14" /></button>
        <div class="win"><button aria-label="Свернуть"><Glyph n="minimize" /></button><button aria-label="Развернуть"><Glyph n="maximize" /></button><button aria-label="Закрыть"><Glyph n="close" /></button></div>
      </header>
      <div class="bar">
        <button aria-label="Назад"><Glyph n="left" /></button><button aria-label="Вперед" class="dim"><Glyph n="right" /></button><button aria-label="Обновить"><Glyph n="refresh" /></button>
        <div class="omni"><span class="tune"><Glyph n="tune" /></span><span class="url"><b>florhub.kz</b>/cashier/terminal.php</span><Glyph n="star" /></div>
        <div class="ext"><Glyph n="puzzle" /><i></i><Glyph n="reader" /><i></i><Glyph n="save" /><Glyph n="avatar" :w="20" /><Glyph n="dots" /></div>
      </div>
      <nav class="marks">
        <Glyph n="apps" /><i></i>
        <div class="mk-list"><a v-for="b in bookmarks" :key="b.t" href="#"><Glyph :n="b.i" /><span>{{ b.t }}</span></a></div>
        <Glyph n="dblChev" :w="12" /><i></i><a href="#"><Glyph n="folderLine" /><span>Все закладки</span></a>
      </nav>

      <div class="page">
        <aside class="side">
          <div class="brand">Flor<span>Hub</span> <small>v3.0</small></div>
          <div class="user"><Glyph n="userShield" :w="18" :ht="15" /><b>Кассир 1</b></div>
          <h6>КАССА</h6>
          <a v-for="m in menu" :key="m.t" href="#" :class="{ on: m.on }"><span class="mi"><Glyph :n="m.i" :w="m.w" :ht="m.ht" /></span>{{ m.t }}</a>
        </aside>
        <div class="main">
          <header class="top">
            <button class="burger" aria-label="Меню"><Glyph n="bars" :w="13" :ht="14" /></button><i></i>
            <div class="acts">
              <button class="x"><Glyph n="print" :w="14" />X-Отчет</button><button class="y"><Glyph n="handUsd" :w="16" :ht="14" />Инкассация/Изъятие</button><button class="r"><Glyph n="power" :w="14" />Закрыть смену</button>
            </div>
            <a href="#" class="exit"><Glyph n="power" :w="13" /><b>Выход</b></a>
          </header>
          <div class="work">
            <section class="card shop">
              <div class="tabs"><a href="#" class="on">Витрина (Букеты)</a><a href="#">Цветы</a></div>
              <div class="tiles">
                <article v-for="p in products" :key="p.id">
                  <Glyph n="spa" :w="32" :ht="28" />
                  <h5>{{ p.t }}</h5><small>ID: {{ p.id }}</small>
                  <button>{{ p.p }} ₸</button>
                </article>
              </div>
            </section>
            <section class="card cart">
              <h3>Корзина</h3>
              <table>
                <colgroup><col /><col class="c2" /><col class="c3" /><col class="c4" /></colgroup>
                <thead><tr><th>Товар</th><th>Кол-во</th><th>Цена</th><th></th></tr></thead>
                <tbody>
                  <tr v-for="b in basket" :key="b.t">
                    <td><b>{{ b.t }}</b><small>{{ b.s }}</small></td>
                    <td><div v-if="b.step" class="step"><button>-</button><span>1</span><button>+</button></div><b v-else>1 шт</b></td>
                    <td><b>{{ b.p }} ₸</b></td>
                    <td><button class="del" aria-label="Удалить"><Glyph n="times" :w="11" :ht="16" /></button></td>
                  </tr>
                </tbody>
              </table>
              <div class="sum"><p>Итого: {{ total }} ₸</p><button>Оплатить</button></div>
            </section>
          </div>
          <footer class="foot"><b>© 2026</b><span>FlorHub v3.0</span></footer>
        </div>

        <div class="shade">
          <form class="modal" role="dialog" aria-labelledby="pay-title" @submit.prevent>
            <header><Glyph n="check" :w="30" :ht="22" /><h2 id="pay-title">Оплата заказа</h2><button type="button" aria-label="Закрыть"><Glyph n="times" :w="13" :ht="19" /></button></header>
            <div class="mbody">
              <p class="due">К оплате:</p>
              <p class="amount">{{ total }} ₸</p>
              <label for="method">Способ оплаты</label>
              <select id="method" class="lg"><option>Смешанная оплата</option></select>
              <label for="bank">Банк-терминал</label>
              <select id="bank"><option>Forte Bank</option></select>
              <fieldset>
                <h4><Glyph n="calc" :w="14" :ht="16" />Распределение сумм</h4>
                <div class="split">
                  <div><label for="cash">Наличными (₸)</label><input id="cash" v-model="cash" class="focus" type="number" /></div>
                  <div><label for="card">Картой / QR (₸)</label><input id="card" v-model="card" type="number" /></div>
                </div>
              </fieldset>
            </div>
            <footer><button type="button" class="cancel">Отмена</button><button type="submit" class="ok"><Glyph n="print" :w="15" />Пробить чек</button></footer>
          </form>
        </div>
      </div>
    </section>

    <footer class="task">
      <div class="weather"><i></i><div><span>23°C</span><small>Sunny</small></div></div>
      <div class="apps">
        <button class="app" aria-label="Пуск"><Glyph n="windows" :w="24" /></button>
        <label class="find"><Glyph n="search" /><input type="text" placeholder="Поиск" aria-label="Поиск" /><Glyph n="castle" :w="50" :ht="24" /></label>
        <button v-for="a in apps" :key="a.i" class="app" :class="{ run: a.run, on: a.on }" :aria-label="a.i"><Glyph :n="a.i" :w="24" /></button>
      </div>
      <div class="tray">
        <Glyph n="chevU" :w="12" /><Glyph n="eyeOff" :w="17" /><span>ENG</span>
        <div class="net"><Glyph n="wifi" /><Glyph n="mute" /><Glyph n="battery" :w="20" :ht="16" /></div>
        <div class="clock"><span>17:09</span><span>18.05.2026</span></div>
      </div>
    </footer>
  </div>
</template>

<style>
body { margin: 0; }
</style>

<style scoped>
* { box-sizing: border-box; }
.desk { position: relative; display: flex; flex-direction: column; min-height: 100vh; font: 12px/16px "Open Sans", "Noto Sans", sans-serif; color: #1b1b1b; background: #fff; }
button { font: inherit; color: inherit; background: none; border: 0; padding: 0; display: inline-flex; align-items: center; justify-content: center; cursor: pointer; }
a { color: inherit; text-decoration: none; }
ul { list-style: none; margin: 0; padding: 0; }
p, h2, h3, h4, h5, h6 { margin: 0; }
svg { display: block; flex: none; }
input { font: inherit; color: inherit; min-width: 0; }

.explorer { flex: 1; display: flex; flex-direction: column; }
.ex-tabs { display: flex; height: 32px; background: #e8e8e8; padding-left: 8px; border-bottom: 1px solid #dedede; }
.ex-tab { display: flex; align-items: center; gap: 10px; width: 240px; margin: 1px 0 -1px; padding: 0 15px 0 9px; background: #f8f8f8; border-radius: 8px 8px 0 0; }
.ex-tab b { flex: 1; font-weight: 600; }
.ex-new { width: 45px; }
.ex-win { display: flex; margin-left: auto; color: #8a8a8a; height: 28px; }
.ex-win button { width: 46px; }
.ex-nav { display: flex; align-items: center; height: 49px; background: #f8f8f8; border-bottom: 1px solid #d2d2d2; padding-right: 8px; font-size: 13px; }
.ex-arrows { display: flex; width: 201px; padding-left: 3px; }
.ex-arrows button { width: 48px; height: 32px; }
.ex-arrows :deep(path) { stroke-width: 1; }
.dim { opacity: .45; }
.ex-path { flex: 1; display: flex; align-items: center; gap: 18px; height: 32px; padding-left: 3px; background: #fdfdfd; border-radius: 4px; margin-right: 7px; }
.backup { display: flex; align-items: center; gap: 7px; height: 24px; padding: 0 8px; background: #f3f3f3; border-radius: 4px; margin-right: -6px; }
.backup svg { color: #1a6fc4; }
.ex-find { display: flex; align-items: center; width: 502px; height: 32px; padding: 0 14px 0 16px; background: #fdfdfd; border-radius: 4px; }
.ex-find input { flex: 1; border: 0; background: none; outline: 0; padding: 0; }
.ex-find input::placeholder { color: #666; opacity: 1; }
.ex-cmd { display: flex; align-items: center; height: 47px; border-bottom: 1px solid #d2d2d2; padding: 2px 20px 0 17px; }
.mk { gap: 8px; width: 82px; justify-content: flex-start; }
.mk svg:last-child { color: #888; }
.vr { width: 1px; height: 31px; background: #e2e2e2; margin: 0 2px 0 16px; }
.tool { width: 48px; }
.info { gap: 8px; margin-left: auto; }
.ex-body { flex: 1; display: flex; color: #000; }
.places { width: 159px; padding-top: 6px; border-right: 1px solid #f0f0f0; font-size: 11px; }
.places ul + ul { position: relative; margin-top: 32px; }
.places ul + ul::before { content: ""; position: absolute; top: -16px; left: 10px; right: 10px; height: 1px; background: #cfcfcf; }
.places li { display: flex; align-items: center; gap: 5px; height: 32px; margin: 0 2px; padding: 0 2px 0 8px; border: 1px solid transparent; }
.places .child { padding-left: 16px; }
.places .on { background: #d9d9d9; border-color: #999; }
.tw { width: 18px; color: #8a8a8a; }
.tw.dark { color: #222; }
.nm { flex: 1; overflow: hidden; white-space: nowrap; }
.pin { color: #909ba3; margin-left: -4px; }
.files { padding: 5px 0 0 49px; }
.files li { display: flex; align-items: center; gap: 4px; height: 33px; }
.ex-status { display: flex; align-items: center; justify-content: space-between; height: 24px; padding: 0 9px 0 14px; color: #1f3864; }
.ex-status div { display: flex; gap: 9px; color: #444; }
.ex-status span { padding-right: 10px; border-right: 1px solid #e2e2e2; font-size: 11px; line-height: 12px; }

.browser { position: absolute; inset: 94px 254px 118px 250px; display: flex; flex-direction: column; border-radius: 8px; background: #fff; box-shadow: 0 0 0 1px #b4b4b4, 0 18px 36px rgba(0, 0, 0, .38), 0 0 24px rgba(0, 0, 0, .2); }
.strip { display: flex; height: 39px; background: #d3e3fd; border-radius: 8px 8px 0 0; color: #222; padding: 5px 0 0 6px; }
.tablist { width: 28px; height: 28px; background: #e9f1fe; border-radius: 9px; margin-right: 6px; }
.tab { display: flex; align-items: center; width: 232px; padding: 0 8px 4px 9px; background: #fff; border-radius: 9px 9px 0 0; gap: 7px; }
.tab span { flex: 1; white-space: nowrap; overflow: hidden; font-size: 11px; }
.newtab { width: 40px; height: 28px; color: #444; }
.win { display: flex; margin-left: auto; height: 28px; color: #000; }
.win button { width: 46px; }
.bar { display: flex; align-items: center; height: 46px; padding: 0 15px 0 5px; color: #454746; }
.bar > button { width: 36px; height: 32px; }
.omni { flex: 1; display: flex; align-items: center; height: 34px; margin: 0 20px 0 8px; padding: 0 15px 0 4px; border-radius: 17px; background: #edf2fa; font-size: 13px; }
.tune { display: flex; align-items: center; justify-content: center; width: 25px; height: 25px; border-radius: 50%; background: #fff; margin-right: 8px; }
.url { flex: 1; }
.url b { font-weight: 400; color: #111; }
.ext { display: flex; align-items: center; gap: 18px; }
.ext i, .marks > i { width: 2px; height: 18px; background: #d3e3fd; }
.marks { display: flex; align-items: center; height: 35px; padding: 0 15px 7px 12px; border-bottom: 1px solid #ddd; gap: 14px; color: #454746; font-size: 11px; }
.marks a { display: flex; align-items: center; gap: 6px; white-space: nowrap; }
.mk-list { flex: 1; display: flex; gap: 20px; }

.page { flex: 1; position: relative; display: flex; padding-right: 15px; border-radius: 0 0 8px 8px; background: #fff; overflow: hidden; font: 13px/21px "Noto Sans CJK SC", "Open Sans", sans-serif; color: #212529; }
.side { width: 250px; background: #343a40; color: #c2c7d0; box-shadow: 0 14px 28px rgba(0, 0, 0, .25), 0 10px 10px rgba(0, 0, 0, .22); z-index: 1; }
.brand { height: 48px; border-bottom: 1px solid #4b545c; text-align: center; line-height: 46px; font-size: 13px; }
.brand span { font-weight: 300; }
.brand small { font-size: 10px; font-weight: 700; }
.user { display: flex; align-items: center; gap: 7px; height: 64px; margin: 0 8px; padding: 0 10px 2px; border-bottom: 1px solid #4f5962; color: #ffc107; }
.side h6 { font-size: 13px; font-weight: 400; padding: 19px 12px 10px; }
.side a { display: flex; align-items: center; height: 33px; margin-bottom: 1px; padding-bottom: 2px; }
.side a.on { background: #007bff; color: #fff; box-shadow: 0 1px 3px rgba(0, 0, 0, .4); }
.side a.on svg { color: #ffc107; }
.mi { display: flex; justify-content: center; width: 30px; margin: 0 3px 0 20px; }
.main { flex: 1; min-width: 0; display: flex; flex-direction: column; background: #f4f6f9; }
.top { display: flex; align-items: center; height: 54px; padding: 0 24px; background: #fff; border-bottom: 1px solid #dee2e6; }
.burger { color: #666; }
.top > i { width: 1px; height: 30px; margin-left: 15px; background: #d5d5d5; }
.acts { display: flex; margin: 0 39px 1px auto; height: 26px; }
.acts button { gap: 2px; padding: 0 3px; white-space: nowrap; }
.acts .x { border: 1px solid #ddd; border-radius: 3px 0 0 3px; color: #444; }
.acts .y { background: #ffc107; color: #1f2d3d; }
.acts .r { background: #dc3545; color: #fff; border-radius: 0 3px 3px 0; }
.exit { display: flex; align-items: center; gap: 7px; color: #dc3545; margin-bottom: 5px; }
.work { flex: 1; display: grid; grid-template-columns: minmax(0, 741fr) minmax(0, 363fr); gap: 15px; padding: 16px 15px 16px 16px; }
.card { background: #fff; border-radius: 4px; box-shadow: 0 0 1px rgba(0, 0, 0, .3), 0 1px 3px rgba(0, 0, 0, .25); }
.tabs { display: flex; height: 40px; padding: 4px 1px 0; border-bottom: 1px solid #dee2e6; }
.tabs a { padding: 0 11px 0 12px; line-height: 32px; color: #007bff; border: 1px solid transparent; }
.tabs a.on { height: 36px; color: #495057; border-color: #dee2e6 #dee2e6 #fff; border-radius: 4px 4px 0 0; }
.tiles { display: grid; grid-template-columns: repeat(3, minmax(0, 1fr)); gap: 15px 16px; padding: 20px 21px 20px 19px; }
.tiles article { display: flex; flex-direction: column; align-items: center; padding: 24px 17px; background: #fdfdfd; border-radius: 4px; box-shadow: 0 1px 3px rgba(0, 0, 0, .14); color: #dc3545; }
.tiles h5 { font-size: 13px; margin-top: 9px; color: #1f2d3d; }
.tiles small { font-size: 10px; line-height: 16px; color: #6c757d; margin-bottom: 10px; }
.tiles button { align-self: stretch; height: 32px; border-radius: 4px; background: #007bff; color: #fff; font-size: 16px; font-weight: 700; }
.cart { align-self: start; }
.cart h3 { height: 44px; padding: 0 20px; font-size: 15px; font-weight: 400; line-height: 42px; border-bottom: 1px solid #dedede; }
.cart table { width: 100%; height: 474px; border-collapse: collapse; table-layout: fixed; }
.c2 { width: 90px; } .c3 { width: 56px; } .c4 { width: 49px; }
th { height: 32px; padding: 0 5px 2px; border-bottom: 2px solid #dee2e6; text-align: center; }
td { padding: 4px 5px 5px; text-align: center; border-top: 1px solid #dee2e6; }
th:first-child, td:first-child { text-align: left; padding-left: 24px; }
th:nth-child(3), td:nth-child(3) { text-align: right; }
td small { display: block; font-size: 10px; color: #6c757d; }
.step { display: flex; width: 80px; height: 31px; margin: 0 auto; border: 1px solid #6c757d; border-radius: 3px; }
.step button { width: 22px; color: #6c757d; }
.step span { flex: 1; line-height: 29px; font-weight: 700; background: #e9ecef; border: 1px solid #6c757d; border-width: 0 1px; }
.del { display: flex; width: 19px; height: 27px; background: #dc3545; color: #fff; border-radius: 2px; }
.sum { padding: 12px 20px; background: #f7f7f7; border-radius: 0 0 4px 4px; }
.sum p { text-align: right; font-size: 18px; line-height: 24px; margin-bottom: 8px; }
.sum button { width: 100%; height: 39px; padding-bottom: 2px; background: #28a745; color: #fff; border-radius: 4px; }
.foot { display: flex; justify-content: space-between; align-items: center; height: 42px; margin-right: -15px; padding: 2px 28px 0 13px; background: #fff; border-top: 1px solid #dee2e6; color: #869099; }

.shade { position: absolute; inset: 0; z-index: 2; padding: 29px 15px 0 0; background: rgba(0, 0, 0, .5); }
.modal { width: 498px; margin: 0 auto; background: #fff; border-radius: 4px; box-shadow: 0 8px 20px rgba(0, 0, 0, .6), 0 0 0 1px rgba(0, 0, 0, .2); }
.modal header { display: flex; align-items: center; gap: 8px; height: 68px; padding: 0 16px; background: #28a745; color: #fff; border-radius: 4px 4px 0 0; }
.modal h2 { flex: 1; font-size: 21px; font-weight: 900; line-height: 34px; padding-bottom: 2px; }
.modal header button { opacity: .5; margin-bottom: 10px; }
.mbody { padding: 15px 16px 16px; }
.due { text-align: center; font-size: 18px; line-height: 26px; color: #6c757d; }
.amount { text-align: center; font-size: 28px; line-height: 36px; font-weight: 700; color: #28a745; margin-bottom: 25px; }
.mbody label { display: block; font-weight: 700; margin-bottom: 9px; }
.mbody select, .mbody input { display: block; width: 100%; height: 38px; margin-bottom: 15px; padding: 0 0 0 12px; border: 1px solid #ced4da; border-radius: 4px; background: #fff; color: #495057; font: inherit; font-size: 14px; outline: 0; }
.mbody .lg { height: 48px; padding-left: 16px; font-size: 18px; }
.mbody fieldset { margin: 0 0 16px; padding: 20px; border: 0; border-radius: 4px; background: #f8f9fb; box-shadow: 0 0 1px rgba(0, 0, 0, .3), 0 1px 3px rgba(0, 0, 0, .2); }
.mbody h4 { display: flex; align-items: center; gap: 8px; font-size: 14px; line-height: 20px; color: #6c757d; margin-bottom: 16px; }
.split { display: grid; grid-template-columns: 1fr 1fr; gap: 15px; color: #1f2d3d; }
.split input { height: 48px; margin: 0; padding: 0 16px; font-size: 18px; }
.mbody .focus { border-color: #80bdff; }
#cash::-webkit-inner-spin-button { opacity: 1; }
.modal footer { display: flex; align-items: center; justify-content: space-between; padding: 16px; border-top: 1px solid #e9ecef; }
.cancel { width: 72px; height: 35px; border: 1px solid #ddd; border-radius: 3px; background: #f8f9fa; color: #444; }
.ok { gap: 8px; width: 137px; height: 39px; border-radius: 4px; background: #28a745; color: #fff; font-weight: 700; }

.task { display: grid; grid-template-columns: 1fr auto 1fr; align-items: center; height: 47px; border-top: 1px solid #b5aba4; background: linear-gradient(90deg, #cfdee6 0, #d8e4d8 5%, #ece5bb 9%, #efdacf 14%, #f0ddd0 50%, #efe0cb 54%, #e9e89b 56%, #ddd8bf 59%, #e6dac9 63%, #ecea9c 67%, #eee6b6 72%, #f0dfd0 78%, #f0ddd0 100%); }
.weather { display: flex; align-items: center; gap: 9px; padding-left: 21px; }
.weather i { width: 20px; height: 20px; border-radius: 50%; background: linear-gradient(135deg, #f2b632, #f0560c); }
.weather span, .weather small { display: block; font-size: 12px; line-height: 16px; }
.weather small { color: #5f5f5f; }
.apps { display: flex; align-items: center; padding-left: 2px; }
.app { position: relative; width: 44px; height: 40px; }
.app.on::before { content: ""; position: absolute; inset: 0 4px; background: rgba(255, 255, 255, .55); border-radius: 4px; }
.app svg { position: relative; }
.app.run::after { content: ""; position: absolute; bottom: -1px; width: 6px; height: 3px; border-radius: 2px; background: #8a8380; }
.app.on::after { width: 16px; background: #0078d4; }
.find { display: flex; align-items: center; gap: 11px; width: 218px; height: 31px; margin: 0 3px; padding: 0 3px 0 10px; border: 1px solid #d9ccc4; border-radius: 16px; background: #faf5f2; font-size: 13px; }
.find input { flex: 1; border: 0; background: none; outline: 0; padding: 0; }
.find input::placeholder { color: #5c5c5c; opacity: 1; }
.tray { display: flex; align-items: center; justify-content: flex-end; padding-right: 17px; gap: 18px; }
.net { display: flex; gap: 8px; }
.clock { display: flex; flex-direction: column; text-align: right; font-size: 11px; }
</style>
